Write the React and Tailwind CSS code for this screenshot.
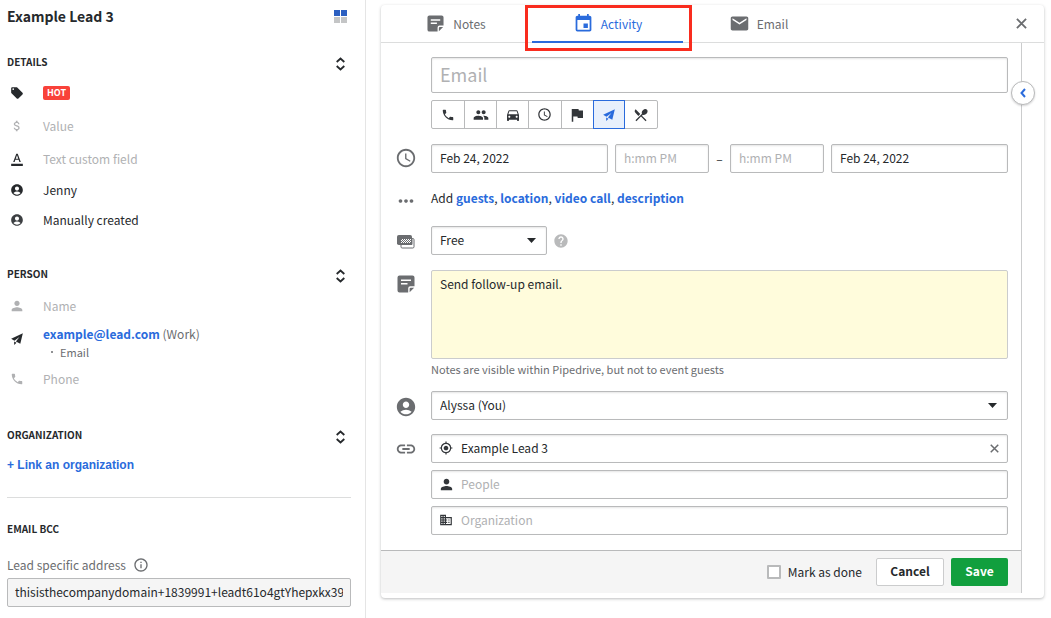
import {
  MdAccessTime,
  MdAccountCircle,
  MdAttachMoney,
  MdBusiness,
  MdDirectionsCar,
  MdEmail,
  MdEvent,
  MdFlag,
  MdFormatColorText,
  MdGpsFixed,
  MdHelp,
  MdInfoOutline,
  MdLink,
  MdLocalOffer,
  MdMoreHoriz,
  MdPeople,
  MdPerson,
  MdPhone,
  MdRestaurantMenu,
} from "react-icons/md";

const field =
  "h-[29px] w-full min-w-0 rounded-[2px] border border-[#b9babb] bg-white px-2 pb-[2px] text-[12px] text-[#26292c] shadow-[inset_0_1px_2px_rgba(38,41,44,0.12)] outline-none placeholder:text-[#b0b1b3] focus:border-[#317ae2]";

const iconField = `${field} pl-[29px]`;

function PaperPlane({ className }) {
  return (
    <svg viewBox="0 0 16 16" fill="currentColor" className={className} aria-hidden="true">
      <path d="M15.800.2.2 7.800l4.400 2.400 6.600-5-4.600 6.200 5.800 3zM4.200 11.400v4.500l3.200-2.900z" />
    </svg>
  );
}

function Cross({ className }) {
  return (
    <svg viewBox="0 0 12 12" fill="none" stroke="currentColor" strokeWidth="2" className={className} aria-hidden="true">
      <path d="M1 1l10 10M11 1 1 11" />
    </svg>
  );
}

function NoteIcon({ className }) {
  return (
    <svg viewBox="0 0 18 18" className={className} aria-hidden="true">
      <path
        fill="currentColor"
        d="M2.500.5h13a2 2 0 0 1 2 2v8.700h-4.300a2 2 0 0 0-2 2v4.300H2.500a2 2 0 0 1-2-2v-13a2 2 0 0 1 2-2z"
      />
      <path fill="currentColor" d="M12.600 17.200v-3.400a1 1 0 0 1 1-1h3.500z" />
      <path stroke="#fff" strokeWidth="1.600" d="M4 5.300h10M4 8.800h6.500" />
    </svg>
  );
}

function BusyIcon({ className }) {
  return (
    <svg viewBox="0 0 18 14" className={className} aria-hidden="true">
      <rect width="15" height="10" rx="1.800" fill="currentColor" />
      <path
        fill="#fff"
        stroke="currentColor"
        d="M15 3.500h.8a1.200 1.200 0 0 1 1.200 1.200v7.100a1.200 1.200 0 0 1-1.200 1.200H5.200a1.200 1.200 0 0 1-1.200-1.200V9.500h11z"
      />
      <path stroke="#fff" strokeWidth="1" strokeDasharray="1 1" d="M5 4.500h9M4 5.500h10M5 6.500h9M4 7.500h10" />
    </svg>
  );
}

function Caret() {
  return (
    <svg
      viewBox="0 0 9 5"
      className="pointer-events-none absolute right-[11px] top-3 h-[5px] w-[9px] text-[#26292c]"
      aria-hidden="true"
    >
      <path fill="currentColor" d="M0 0h9L4.500 5z" />
    </svg>
  );
}

function SectionHeading({ title, className }) {
  return (
    <div className={`flex h-5 items-center justify-between ${className}`}>
      <h2 className="text-[10px] font-bold leading-5">{title}</h2>
      <button type="button" aria-label={`Reorder ${title.toLowerCase()}`} className="mr-[5px] mt-[3px] text-[#26292c]">
        <svg viewBox="0 0 11 14" fill="none" stroke="currentColor" strokeWidth="1.800" className="h-[14px] w-[11px]">
          <path d="M1.700 5 5.500 1.500 9.300 5M1.700 9l3.800 3.500L9.300 9" />
        </svg>
      </button>
    </div>
  );
}

function DetailRow({ icon, children, className }) {
  return (
    <li className={`flex items-center ${className}`}>
      <span className="flex w-9 shrink-0">
        <span className="flex w-5 justify-center">{icon}</span>
      </span>
      {children}
    </li>
  );
}

function Sidebar() {
  return (
    <aside className="w-[366px] shrink-0 border-r border-[#e5e5e5] pb-[10px] pl-[7px] pr-[14px] pt-1">
      <div className="flex h-6 items-center justify-between">
        <h1 className="text-[14px] font-bold leading-6">Example Lead 3</h1>
        <svg viewBox="0 0 13 13" className="mr-1 h-[13px] w-[13px]" aria-hidden="true">
          <path fill="#2b5fc1" d="M0 0h6v6H0zM7 0h6v6H7z" />
          <path fill="#c4c5c6" d="M0 7h6v6H0zM7 7h6v6H7z" />
        </svg>
      </div>

      <SectionHeading title="DETAILS" className="mt-6" />
      <ul className="mt-1">
        <DetailRow className="h-[33px]" icon={<MdLocalOffer className="size-[14px]" />}>
          <span className="flex h-[14px] items-center rounded-[2px] bg-[#f9423a] px-1 text-[9px] font-bold leading-[14px] text-white">
            HOT
          </span>
        </DetailRow>
        <DetailRow className="h-[33px] text-[#b0b1b3]" icon={<MdAttachMoney className="size-[14px]" />}>
          Value
        </DetailRow>
        <DetailRow
          className="h-[33px] text-[#b0b1b3]"
          icon={<MdFormatColorText className="size-[14px] text-[#26292c]" />}
        >
          Text custom field
        </DetailRow>
        <DetailRow className="h-[30px]" icon={<MdAccountCircle className="size-[14px]" />}>
          Jenny
        </DetailRow>
        <DetailRow className="h-[30px]" icon={<MdAccountCircle className="size-[14px] text-[#3c3f42]" />}>
          Manually created
        </DetailRow>
      </ul>

      <SectionHeading title="PERSON" className="mt-[29px]" />
      <ul className="mt-[5px]">
        <DetailRow className="h-[33px] text-[#b0b1b3]" icon={<MdPerson className="size-4" />}>
          Name
        </DetailRow>
        <DetailRow className="h-10" icon={<PaperPlane className="mb-[6px] size-3" />}>
          <div>
            <p className="leading-5 text-[#6b6d70]">
              <a href="#email" className="font-bold text-[#2a6bdc]">
                example@lead.com
              </a>{" "}
              (Work)
            </p>
            <p className="flex items-center pl-2 text-[11px] leading-[17px] text-[#6b6d70]">
              <span className="mr-[7px] size-[2px] rounded-full bg-[#6b6d70]" />
              Email
            </p>
          </div>
        </DetailRow>
        <DetailRow className="h-[33px] text-[#b0b1b3]" icon={<MdPhone className="size-[14px]" />}>
          Phone
        </DetailRow>
      </ul>

      <SectionHeading title="ORGANIZATION" className="mt-[30px]" />
      <button
        type="button"
        className="mt-[10px] block font-['Liberation_Sans',Arial,sans-serif] text-[12px] font-bold leading-5 text-[#2a6bdc]"
      >
        + Link an organization
      </button>
      <hr className="mt-[22px] border-[#dcdddd]" />

      <h2 className="mt-[21px] text-[10px] font-bold leading-5">EMAIL BCC</h2>
      <div className="mt-4 flex h-5 items-center gap-[7px] text-[#6b6d70]">
        <label htmlFor="bcc">Lead specific address</label>
        <MdInfoOutline className="size-4" />
      </div>
      <input
        id="bcc"
        readOnly
        defaultValue="thisisthecompanydomain+1839991+leadt61o4gtYhepxkx39d2@pipedrivemail.com"
        className="mt-[3px] block h-[29px] w-full rounded-[2px] border border-[#b9babb] bg-[#f5f5f5] px-[7px] pb-[2px] outline-none"
      />
    </aside>
  );
}

function FormRow({ icon, className = "", children }) {
  return (
    <div className={`flex ${className}`}>
      <span className="flex w-[50px] shrink-0 items-start justify-center text-[#6b6d70]">{icon}</span>
      <div className="min-w-0 flex-1">{children}</div>
    </div>
  );
}

const activityTypes = [
  { name: "Call", Icon: MdPhone, size: "size-[14px]" },
  { name: "Meeting", Icon: MdPeople, size: "size-4" },
  { name: "Drive", Icon: MdDirectionsCar, size: "size-4" },
  { name: "Deadline", Icon: MdAccessTime, size: "size-[15px]" },
  { name: "Task", Icon: MdFlag, size: "size-[18px]" },
  { name: "Email", Icon: PaperPlane, size: "size-3", selected: true },
  { name: "Lunch", Icon: MdRestaurantMenu, size: "size-4" },
];

function ActivityForm() {
  return (
    <form className="min-w-0 flex-1 border-r border-[#cbcccd]" onSubmit={(e) => e.preventDefault()}>
      <div className="pb-[15px] pr-[13px] pt-[14px]">
        <FormRow>
          <input
            aria-label="Subject"
            placeholder="Email"
            className="block h-9 w-full rounded-[2px] border border-[#b9babb] px-2 pb-[2px] text-[18px] shadow-[inset_0_1px_2px_rgba(38,41,44,0.12)] outline-none placeholder:text-[#b0b1b3]"
          />
          <div className="mt-[7px] grid h-[29px] w-[227px] grid-cols-7 rounded-[2px] border border-[#b9babb]">
            {activityTypes.map(({ name, Icon, size, selected }, i) => (
              <button
                key={name}
                type="button"
                aria-label={name}
                aria-pressed={!!selected}
                className={
                  selected
                    ? "relative -my-px flex items-center justify-center border border-[#2a6bdc] bg-[#e8f0fc] text-[#2a6bdc]"
                    : i === 0 || activityTypes[i - 1].selected
                      ? "flex items-center justify-center text-[#33363a]"
                      : "flex items-center justify-center border-l border-[#b9babb] text-[#33363a]"
                }
              >
                <Icon className={size} />
              </button>
            ))}
          </div>
        </FormRow>

        <FormRow className="mt-[15px]" icon={<MdAccessTime className="mt-[3px] size-[22px]" />}>
          <div className="flex items-center">
            <input aria-label="Start date" defaultValue="Feb 24, 2022" className={`${field} flex-1`} />
            <input aria-label="Start time" placeholder="h:mm PM" className={`${field} ml-[7px] max-w-[94px]`} />
            <span className="w-[21px] shrink-0 text-center">–</span>
            <input aria-label="End time" placeholder="h:mm PM" className={`${field} mr-[7px] max-w-[94px]`} />
            <input aria-label="End date" defaultValue="Feb 24, 2022" className={`${field} flex-1`} />
          </div>
        </FormRow>

        <FormRow className="mt-4" icon={<MdMoreHoriz className="mt-px size-[22px]" />}>
          <p className="leading-[18px]">
            Add{" "}
            <a href="#guests" className="font-bold text-[#2a6bdc]">guests</a>,{" "}
            <a href="#location" className="font-bold text-[#2a6bdc]">location</a>,{" "}
            <a href="#video" className="font-bold text-[#2a6bdc]">video call</a>,{" "}
            <a href="#description" className="font-bold text-[#2a6bdc]">description</a>
          </p>
        </FormRow>

        <FormRow className="mt-[14px]" icon={<BusyIcon className="mt-[9px] h-[14px] w-[18px]" />}>
          <div className="flex items-center">
            <div className="relative w-[116px]">
              <select aria-label="Availability" className={`${field} appearance-none`}>
                <option>Free</option>
                <option>Busy</option>
              </select>
              <Caret />
            </div>
            <MdHelp className="ml-[6px] size-4 text-[#b9babb]" />
          </div>
        </FormRow>

        <FormRow className="mt-[15px]" icon={<NoteIcon className="mt-[5px] size-[18px]" />}>
          <textarea
            aria-label="Note"
            defaultValue="Send follow-up email."
            className="block h-[89px] w-full resize-none rounded-[2px] border border-[#cbcccd] bg-[#fffcdc] px-2 py-[3px] leading-5 outline-none"
          />
          <p className="text-[11px] leading-5 text-[#6b6d70]">
            Notes are visible within Pipedrive, but not to event guests
          </p>
        </FormRow>

        <FormRow className="mt-3" icon={<MdAccountCircle className="mt-[5px] size-[22px]" />}>
          <div className="relative">
            <select aria-label="Assigned user" className={`${field} appearance-none`}>
              <option>Alyssa (You)</option>
            </select>
            <Caret />
          </div>
        </FormRow>

        <FormRow className="mt-[14px]" icon={<MdLink className="mt-1 size-[22px]" />}>
          <div className="flex flex-col gap-[7px]">
            <div className="relative">
              <MdGpsFixed className="absolute left-2 top-[7px] size-[14px] text-[#33363a]" />
              <input aria-label="Lead" defaultValue="Example Lead 3" className={iconField} />
              <button type="button" aria-label="Remove lead" className="absolute right-[9px] top-[10px] text-[#6b6d70]">
                <Cross className="size-[9px]" />
              </button>
            </div>
            <div className="relative">
              <MdPerson className="absolute left-[7px] top-[6px] size-[17px] text-[#33363a]" />
              <input aria-label="People" placeholder="People" className={iconField} />
            </div>
            <div className="relative">
              <MdBusiness className="absolute left-2 top-[7px] size-[14px] text-[#33363a]" />
              <input aria-label="Organization" placeholder="Organization" className={iconField} />
            </div>
          </div>
        </FormRow>
      </div>

      <div className="flex items-center justify-end border-t border-[#b9babb] bg-[#f5f5f5] py-[7px] pr-[13px]">
        <label className="flex items-center gap-[7px]">
          <input
            type="checkbox"
            className="size-[14px] appearance-none rounded-[1px] border-2 border-[#b9babb] bg-white checked:bg-[#2a6bdc]"
          />
          Mark as done
        </label>
        <button
          type="button"
          className="ml-[14px] h-7 w-[68px] rounded-[2px] border border-[#cbcccd] bg-white pb-[2px] font-bold"
        >
          Cancel
        </button>
        <button type="submit" className="ml-[7px] h-7 w-[57px] rounded-[2px] bg-[#119f3e] pb-[2px] font-bold text-white">
          Save
        </button>
      </div>
    </form>
  );
}

export default function App() {
  return (
    <div className="flex min-h-screen bg-white font-['Noto_Sans_CJK_SC',sans-serif] text-[12px] leading-5 text-[#26292c]">
      <Sidebar />
      <main className="min-w-0 flex-1 pb-5 pl-[15px] pr-[7px] pt-[5px]">
        <section className="rounded-[4px] pb-[5px] shadow-[0_1px_3px_rgba(38,41,44,0.3)]">
          <header className="flex h-[38px] items-center border-b border-[#dcdddd] text-[#6b6d70]">
            <button type="button" className="flex h-full w-[151px] items-center justify-center gap-[9px]">
              <NoteIcon className="size-[17px]" />
              Notes
            </button>
            <button
              type="button"
              className="relative flex h-full w-[151px] items-center justify-center gap-[7px] text-[#2a6bdc]"
            >
              <MdEvent className="size-[21px]" />
              Activity
              <span className="absolute inset-x-0 -bottom-px h-[2px] bg-[#2a6bdc]" />
              <span className="absolute -bottom-[9px] -left-[7px] -right-[9px] top-0 border-[3px] border-[#f92c1e]" />
            </button>
            <button type="button" className="flex h-full w-[151px] items-center justify-center gap-[7px]">
              <MdEmail className="size-[21px]" />
              Email
            </button>
            <button type="button" aria-label="Close" className="ml-auto mr-[17px]">
              <Cross className="size-[11px]" />
            </button>
          </header>
          <div className="relative flex pr-[22px]">
            <ActivityForm />
            <button
              type="button"
              aria-label="Expand panel"
              className="absolute right-[9px] top-[38px] flex size-6 items-center justify-center rounded-full border border-[#b9babb] bg-white text-[#2a6bdc] shadow-[0_1px_2px_rgba(38,41,44,0.2)]"
            >
              <svg viewBox="0 0 6 10" fill="none" stroke="currentColor" strokeWidth="2" className="h-[10px] w-[6px]">
                <path d="M5 1 1.500 5 5 9" />
              </svg>
            </button>
          </div>
        </section>
      </main>
    </div>
  );
}
